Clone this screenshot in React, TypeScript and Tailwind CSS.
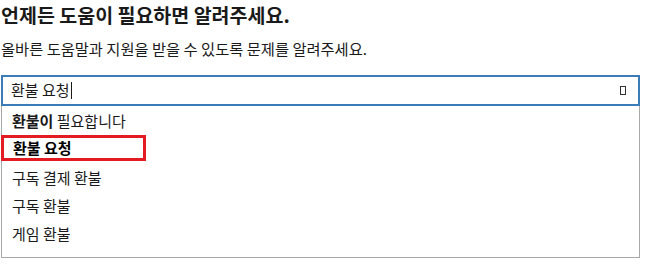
import React from 'react';

const items = ['환불이 필요합니다', '환불 요청', '구독 결제 환불', '구독 환불', '게임 환불'];

export default function App() {
  return (
    <div className="w-[649px] h-[272px] bg-white text-[#1a1a1a] font-['Noto_Sans_CJK_KR',sans-serif]">
      <div className="pt-[2px] pl-[1px] w-[640px]">
        <h1 className="text-[19.5px] leading-[26px] font-bold">언제든 도움이 필요하면 알려주세요.</h1>
        <p className="mt-[10px] text-[15.3px] leading-[20px]">올바른 도움말과 지원을 받을 수 있도록 문제를 알려주세요.</p>

        <div className="mt-[17px] h-[31px] border-2 border-[#3a7bb8] flex items-center justify-between pl-[8px] pr-[12px]">
          <div className="flex items-center text-[15px]">
            <span>환불 요청</span>
            <span className="ml-[1px] w-[1px] h-[17px] bg-[#1a1a1a]" />
          </div>
          <span className="w-[6px] h-[9px] border border-[#333]" />
        </div>

        <div className="h-[152px] border border-t-0 border-[#a8a8a8] pt-[1px]">
          {items.map((item, i) =>
            i === 1 ? (
              <div key={item} className="h-[29px]">
                <div className="w-[145px] h-[26px] -ml-[1px] border-[3px] border-[#e31b23] flex items-center pl-[9px] text-[15px] font-bold text-black">
                  {item}
                </div>
              </div>
            ) : i === 0 ? (
              <div key={item} className="h-[28px] flex items-center pl-[10px] text-[15px]">
                <span>
                  <span className="font-bold">환불이</span> 필요합니다
                </span>
              </div>
            ) : (
              <div key={item} className="h-[28px] flex items-center pl-[10px] text-[15px]">
                {item}
              </div>
            )
          )}
        </div>
      </div>
    </div>
  );
}
